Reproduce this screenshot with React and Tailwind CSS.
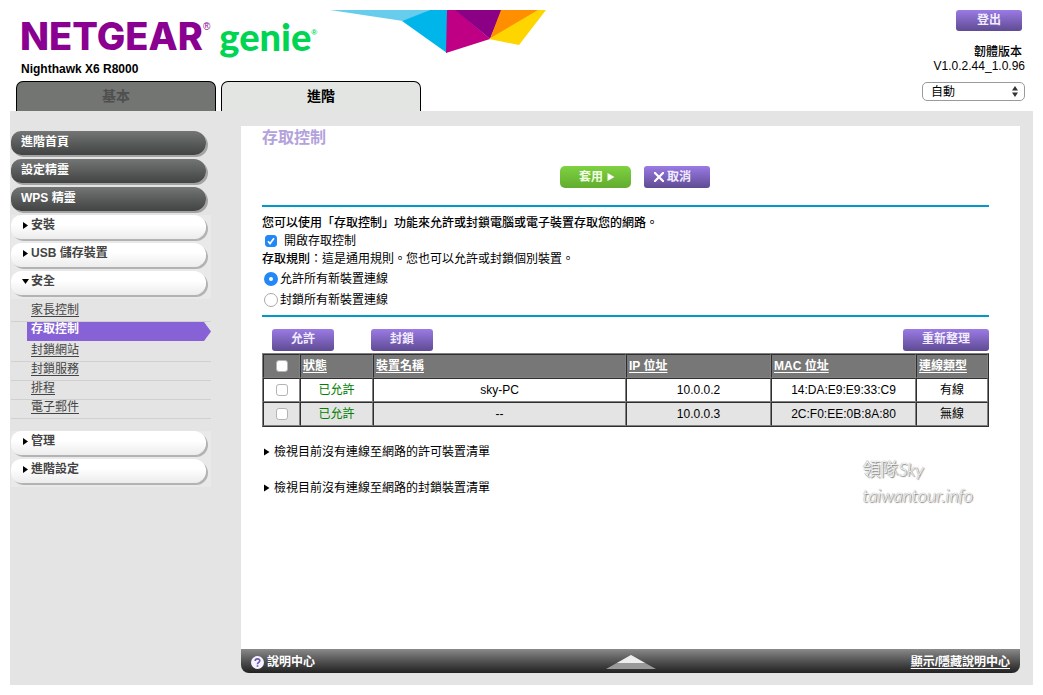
import React from "react";

const purple =
  "flex items-center justify-center rounded-[3px] bg-linear-to-b from-[#9b7be6] to-[#5f4b93] text-[12px] leading-[16px] font-bold text-[#f1ecff]";

function Brand() {
  return (
    <div className="flex w-[320px] shrink-0 items-start pl-[10px] pt-[7px]">
      <span className="font-['Inter'] text-[38px] leading-[38px] font-extrabold text-[#8a0090]">NETGEAR</span>
      <span className="pt-[5px] text-[10px] leading-[10px] text-[#8a0090]">®</span>
      <span className="pl-[9px] font-['Lato'] text-[38px] leading-[38px] font-black text-[#00d453]">genie</span>
      <span className="pt-[12px] text-[8px] leading-[8px] font-bold text-[#00d453]">®</span>
    </div>
  );
}

function Ribbon() {
  return (
    <svg className="block shrink-0" width="216" height="43" viewBox="0 0 216 43" aria-hidden="true">
      <path d="M0 0H101L73 11Z" fill="#68cdec" />
      <path d="M100 0H117V43L72 11Z" fill="#00b5ea" />
      <path d="M117 0H126L160 29L116 43Z" fill="#bf0085" />
      <path d="M125 0H172L160 29Z" fill="#8c0085" />
      <path d="M171 0H209L160 29Z" fill="#ff8f00" />
      <path d="M208 0H216L189 35L159 29Z" fill="#ffd500" />
    </svg>
  );
}

function DarkItem({ children }) {
  return (
    <a
      href="#"
      className="mb-[4px] block h-6 w-[195px] rounded-l-[10px] rounded-r-[12px] bg-linear-to-b from-[#737674] to-[#424443] pl-[10px] text-[12px] leading-[22px] font-bold text-white shadow-[2px_2px_0_#a3a3a3]"
    >
      {children}
    </a>
  );
}

function LightItem({ open, children }) {
  return (
    <div className="h-7 w-[200px] bg-[#e9e9e9]">
      <button
        type="button"
        aria-expanded={!!open}
        className="flex h-6 w-[195px] items-start rounded-l-[10px] rounded-r-[12px] bg-linear-to-b from-white from-40% to-[#ececec] pl-[11px] text-[12px] leading-[21px] font-bold text-[#444] shadow-[2px_2px_0_#b3b3b3]"
      >
        <svg className="mt-[7px] mr-[2px]" width="7" height="7" viewBox="0 0 7 7" aria-hidden="true">
          <path d={open ? "M0 1H7L3.500 6Z" : "M1 0V7L6 3.500Z"} fill="#000" />
        </svg>
        {children}
      </button>
    </div>
  );
}

function SubItem({ children }) {
  return (
    <li className="h-[19px] border-b border-[#d0d0d0] pl-5 leading-[15px]">
      <a href="#" className="underline underline-offset-2">{children}</a>
    </li>
  );
}

function Check({ label, checked, id }) {
  return (
    <span className="relative inline-flex h-3 w-3 align-middle">
      <input
        id={id}
        type="checkbox"
        defaultChecked={checked}
        aria-label={label}
        className="peer h-3 w-3 appearance-none rounded-[3px] border border-[#b4b4b4] bg-white checked:border-[#2388f7] checked:bg-[#2388f7]"
      />
      <svg
        className="pointer-events-none absolute inset-0 hidden peer-checked:block"
        width="12"
        height="12"
        viewBox="0 0 12 12"
        fill="none"
        aria-hidden="true"
      >
        <path d="M3 6.300L5 8.600L9 3.200" stroke="#fff" strokeWidth="1.600" />
      </svg>
    </span>
  );
}

function Rule({ id, label, checked }) {
  return (
    <div className="flex h-[21px] items-center gap-[2px] pl-[2px]">
      <input
        id={id}
        type="radio"
        name="rule"
        defaultChecked={checked}
        className="h-[14px] w-[14px] appearance-none rounded-full border border-[#aaa] bg-white checked:border-[5px] checked:border-[#2388f7]"
      />
      <label htmlFor={id}>{label}</label>
    </div>
  );
}

const cellEdge = "border border-t-[#2e2e2e] border-l-[#2e2e2e] border-r-[#808080] border-b-[#808080]";
const headers = ["狀態", "裝置名稱", "IP 位址", "MAC 位址", "連線類型"];
const devices = [
  ["已允許", "sky-PC", "10.0.0.2", "14:DA:E9:E9:33:C9", "有線"],
  ["已允許", "--", "10.0.0.3", "2C:F0:EE:0B:8A:80", "無線"],
];

function Devices() {
  return (
    <table className="mt-[2px] w-full table-fixed border-separate border-spacing-0 border border-t-[#808080] border-l-[#808080] border-r-[#2e2e2e] border-b-[#2e2e2e] text-[12px] leading-[16px]">
      <colgroup>
        <col className="w-[37px]" />
        <col className="w-[73px]" />
        <col />
        <col className="w-[145px]" />
        <col className="w-[145px]" />
        <col className="w-[72px]" />
      </colgroup>
      <thead>
        <tr className="h-6 bg-[#777] text-left text-white">
          <th className={cellEdge + " text-center leading-[12px]"}>
            <Check label="全選" />
          </th>
          {headers.map((h) => (
            <th key={h} className={cellEdge + " px-[2px] font-bold"}>
              <a href="#" className="underline underline-offset-2">{h}</a>
            </th>
          ))}
        </tr>
      </thead>
      <tbody>
        {devices.map((row) => (
          <tr key={row[2]} className="h-6 bg-white text-center even:bg-[#e4e4e4]">
            <td className={cellEdge + " leading-[12px]"}>
              <Check label={row[2]} />
            </td>
            {row.map((cell, i) => (
              <td key={i} className={cellEdge + " nth-2:text-[#008000]"}>
                {cell}
              </td>
            ))}
          </tr>
        ))}
      </tbody>
    </table>
  );
}

function Disclosure({ children }) {
  return (
    <button type="button" className="mb-5 flex h-4 items-center gap-[4px] pl-[2px] leading-[16px]">
      <svg width="6" height="8" viewBox="0 0 6 8" aria-hidden="true">
        <path d="M0 0.500L5.500 4L0 7.500Z" fill="#000" />
      </svg>
      {children}
    </button>
  );
}

export default function App() {
  return (
    <div className="flex min-h-screen flex-col bg-white p-[10px] font-['Liberation_Sans','Noto_Sans_CJK_TC',sans-serif] text-[12px] leading-[18px] text-black">
      <header className="flex justify-between">
        <div>
          <div className="flex h-[50px] items-start">
            <Brand />
            <Ribbon />
          </div>
          <div className="h-[21px] pl-[11px] text-[12px] font-bold">Nighthawk X6 R8000</div>
          <nav className="flex gap-[5px] pl-[6px] text-[14px] leading-[28px] font-bold">
            <a href="#" className="h-[30px] w-[200px] rounded-t-[7px] border border-b-0 border-black bg-[#737573] text-center text-[#4f4f4f]">基本</a>
            <a href="#" className="h-[30px] w-[200px] rounded-t-[7px] border border-b-0 border-black bg-[#e3e5e2] text-center">進階</a>
          </nav>
        </div>
        <div className="flex flex-col items-end pr-[8px]">
          <button type="button" className={purple + " mr-[3px] h-[21px] w-[66px] pb-[2px]"}>登出</button>
          <div className="mt-[14px] pr-[3px] leading-[14px] font-medium">韌體版本</div>
          <div className="leading-[14px]">V1.0.2.44_1.0.96</div>
          <div className="relative mt-[9px]">
            <select
              aria-label="語言"
              className="block h-[19px] w-[103px] appearance-none rounded-[5px] border border-[#9a9a9a] bg-white pl-2 text-[12px] leading-[16px]"
            >
              <option>自動</option>
            </select>
            <svg className="pointer-events-none absolute top-[4px] right-[7px]" width="6" height="11" viewBox="0 0 6 11" aria-hidden="true">
              <path d="M3 0L6 4.500H0ZM3 11L0 6.500H6Z" fill="#333" />
            </svg>
          </div>
        </div>
      </header>

      <div className="flex flex-1 bg-[#e4e4e4] pr-[13px] pb-3">
        <aside className="w-[231px] shrink-0 pt-5 pl-px">
          <DarkItem>進階首頁</DarkItem>
          <DarkItem>設定精靈</DarkItem>
          <DarkItem>WPS 精靈</DarkItem>
          <LightItem>安裝</LightItem>
          <LightItem>USB 儲存裝置</LightItem>
          <LightItem open>安全</LightItem>
          <ul className="mt-[4px] mb-3 w-[200px] text-[12px] text-[#444]">
            <SubItem>家長控制</SubItem>
            <li className="flex h-[21px]">
              <span className="w-4" />
              <a
                href="#"
                className="h-[19px] flex-1 bg-[#8662d6] pl-1 leading-[15px] font-bold text-white [clip-path:polygon(0_0,calc(100%-7px)_0,100%_50%,calc(100%-7px)_100%,0_100%)]"
              >
                存取控制
              </a>
            </li>
            <SubItem>封鎖網站</SubItem>
            <SubItem>封鎖服務</SubItem>
            <SubItem>排程</SubItem>
            <SubItem>電子郵件</SubItem>
          </ul>
          <LightItem>管理</LightItem>
          <LightItem>進階設定</LightItem>
        </aside>

        <div className="flex min-w-0 flex-1 flex-col pt-[15px]">
          <main className="relative flex-1 bg-white pr-[31px] pl-[21px]">
            <h1 className="h-10 text-[16px] leading-[24px] font-bold text-[#b3a2dc]">存取控制</h1>
            <div className="flex justify-center gap-[13px] pl-[18px]">
              <button
                type="button"
                className="flex h-[22px] w-[71px] items-center justify-center gap-1 rounded-[5px] bg-linear-to-b from-[#7fd242] to-[#62ac2e] pl-[4px] text-[12px] leading-[16px] font-bold text-[#f1ffe6]"
              >
                套用
                <svg width="8" height="8" viewBox="0 0 8 8" aria-hidden="true">
                  <path d="M0.500 0L7.500 4L0.500 8Z" fill="#fff" />
                </svg>
              </button>
              <button type="button" className={purple + " h-[22px] w-[66px] gap-[3px] pr-2"}>
                <svg width="10" height="10" viewBox="0 0 10 10" aria-hidden="true">
                  <path d="M0 0L10 10M10 0L0 10" stroke="#fff" strokeWidth="2.200" />
                </svg>
                取消
              </button>
            </div>
            <div className="mt-[17px] border-y-2 border-[#0099cc] pt-[7px] pb-[5px]">
              <p className="font-medium">您可以使用「存取控制」功能來允許或封鎖電腦或電子裝置存取您的網路。</p>
              <div className="flex h-[18px] items-center gap-[7px] pl-[3px]">
                <Check id="acl" checked />
                <label htmlFor="acl">開啟存取控制</label>
              </div>
              <p><span className="font-medium">存取規則</span>：這是通用規則。您也可以允許或封鎖個別裝置。</p>
              <Rule id="allow" label="允許所有新裝置連線" checked />
              <Rule id="block" label="封鎖所有新裝置連線" />
            </div>
            <div className="mt-3 flex pl-[10px]">
              <button type="button" className={purple + " h-[22px] w-[62px] pb-[2px]"}>允許</button>
              <button type="button" className={purple + " ml-[37px] h-[22px] w-[62px] pb-[2px]"}>封鎖</button>
              <button type="button" className={purple + " ml-auto h-[22px] w-[86px] pb-[2px]"}>重新整理</button>
            </div>
            <Devices />
            <div className="mt-[17px]">
              <Disclosure>檢視目前沒有連線至網路的許可裝置清單</Disclosure>
              <Disclosure>檢視目前沒有連線至網路的封鎖裝置清單</Disclosure>
            </div>
            <div className="absolute top-[330px] right-[47px] font-['Lato','Noto_Sans_CJK_TC',sans-serif] text-[18px] leading-[26px] font-light text-white [text-shadow:0_0_1px_#666,1px_1px_1px_#777]">
              <div>領隊<i>Sky</i></div>
              <div className="italic">taiwantour.info</div>
            </div>
          </main>
          <footer className="flex h-6 items-center justify-between rounded-b-[8px] bg-linear-to-b from-[#8a8a8a] to-[#222] px-[10px] pt-[2px] font-bold text-white">
            <a href="#" className="flex flex-1 items-center gap-[3px]">
              <svg width="13" height="13" viewBox="0 0 13 13" fill="none" aria-hidden="true">
                <circle cx="6.500" cy="6.500" r="6.500" fill="#f6f3ff" />
                <path d="M4.200 5C4.200 2.300 9 2.300 8.800 4.800C8.700 6.400 6.500 6.300 6.500 8.200M6.500 9.200V10.800" stroke="#6a55b5" strokeWidth="1.700" />
              </svg>
              說明中心
            </a>
            <button type="button" aria-label="展開說明">
              <svg width="50" height="14" viewBox="0 0 50 14" aria-hidden="true">
                <path d="M25 0L50 14H0Z" fill="#999" />
                <path d="M25 0L39 8H11Z" fill="#eee" />
              </svg>
            </button>
            <span className="flex flex-1 justify-end">
              <a href="#" className="underline underline-offset-2">顯示/隱藏說明中心</a>
            </span>
          </footer>
        </div>
      </div>
    </div>
  );
}
